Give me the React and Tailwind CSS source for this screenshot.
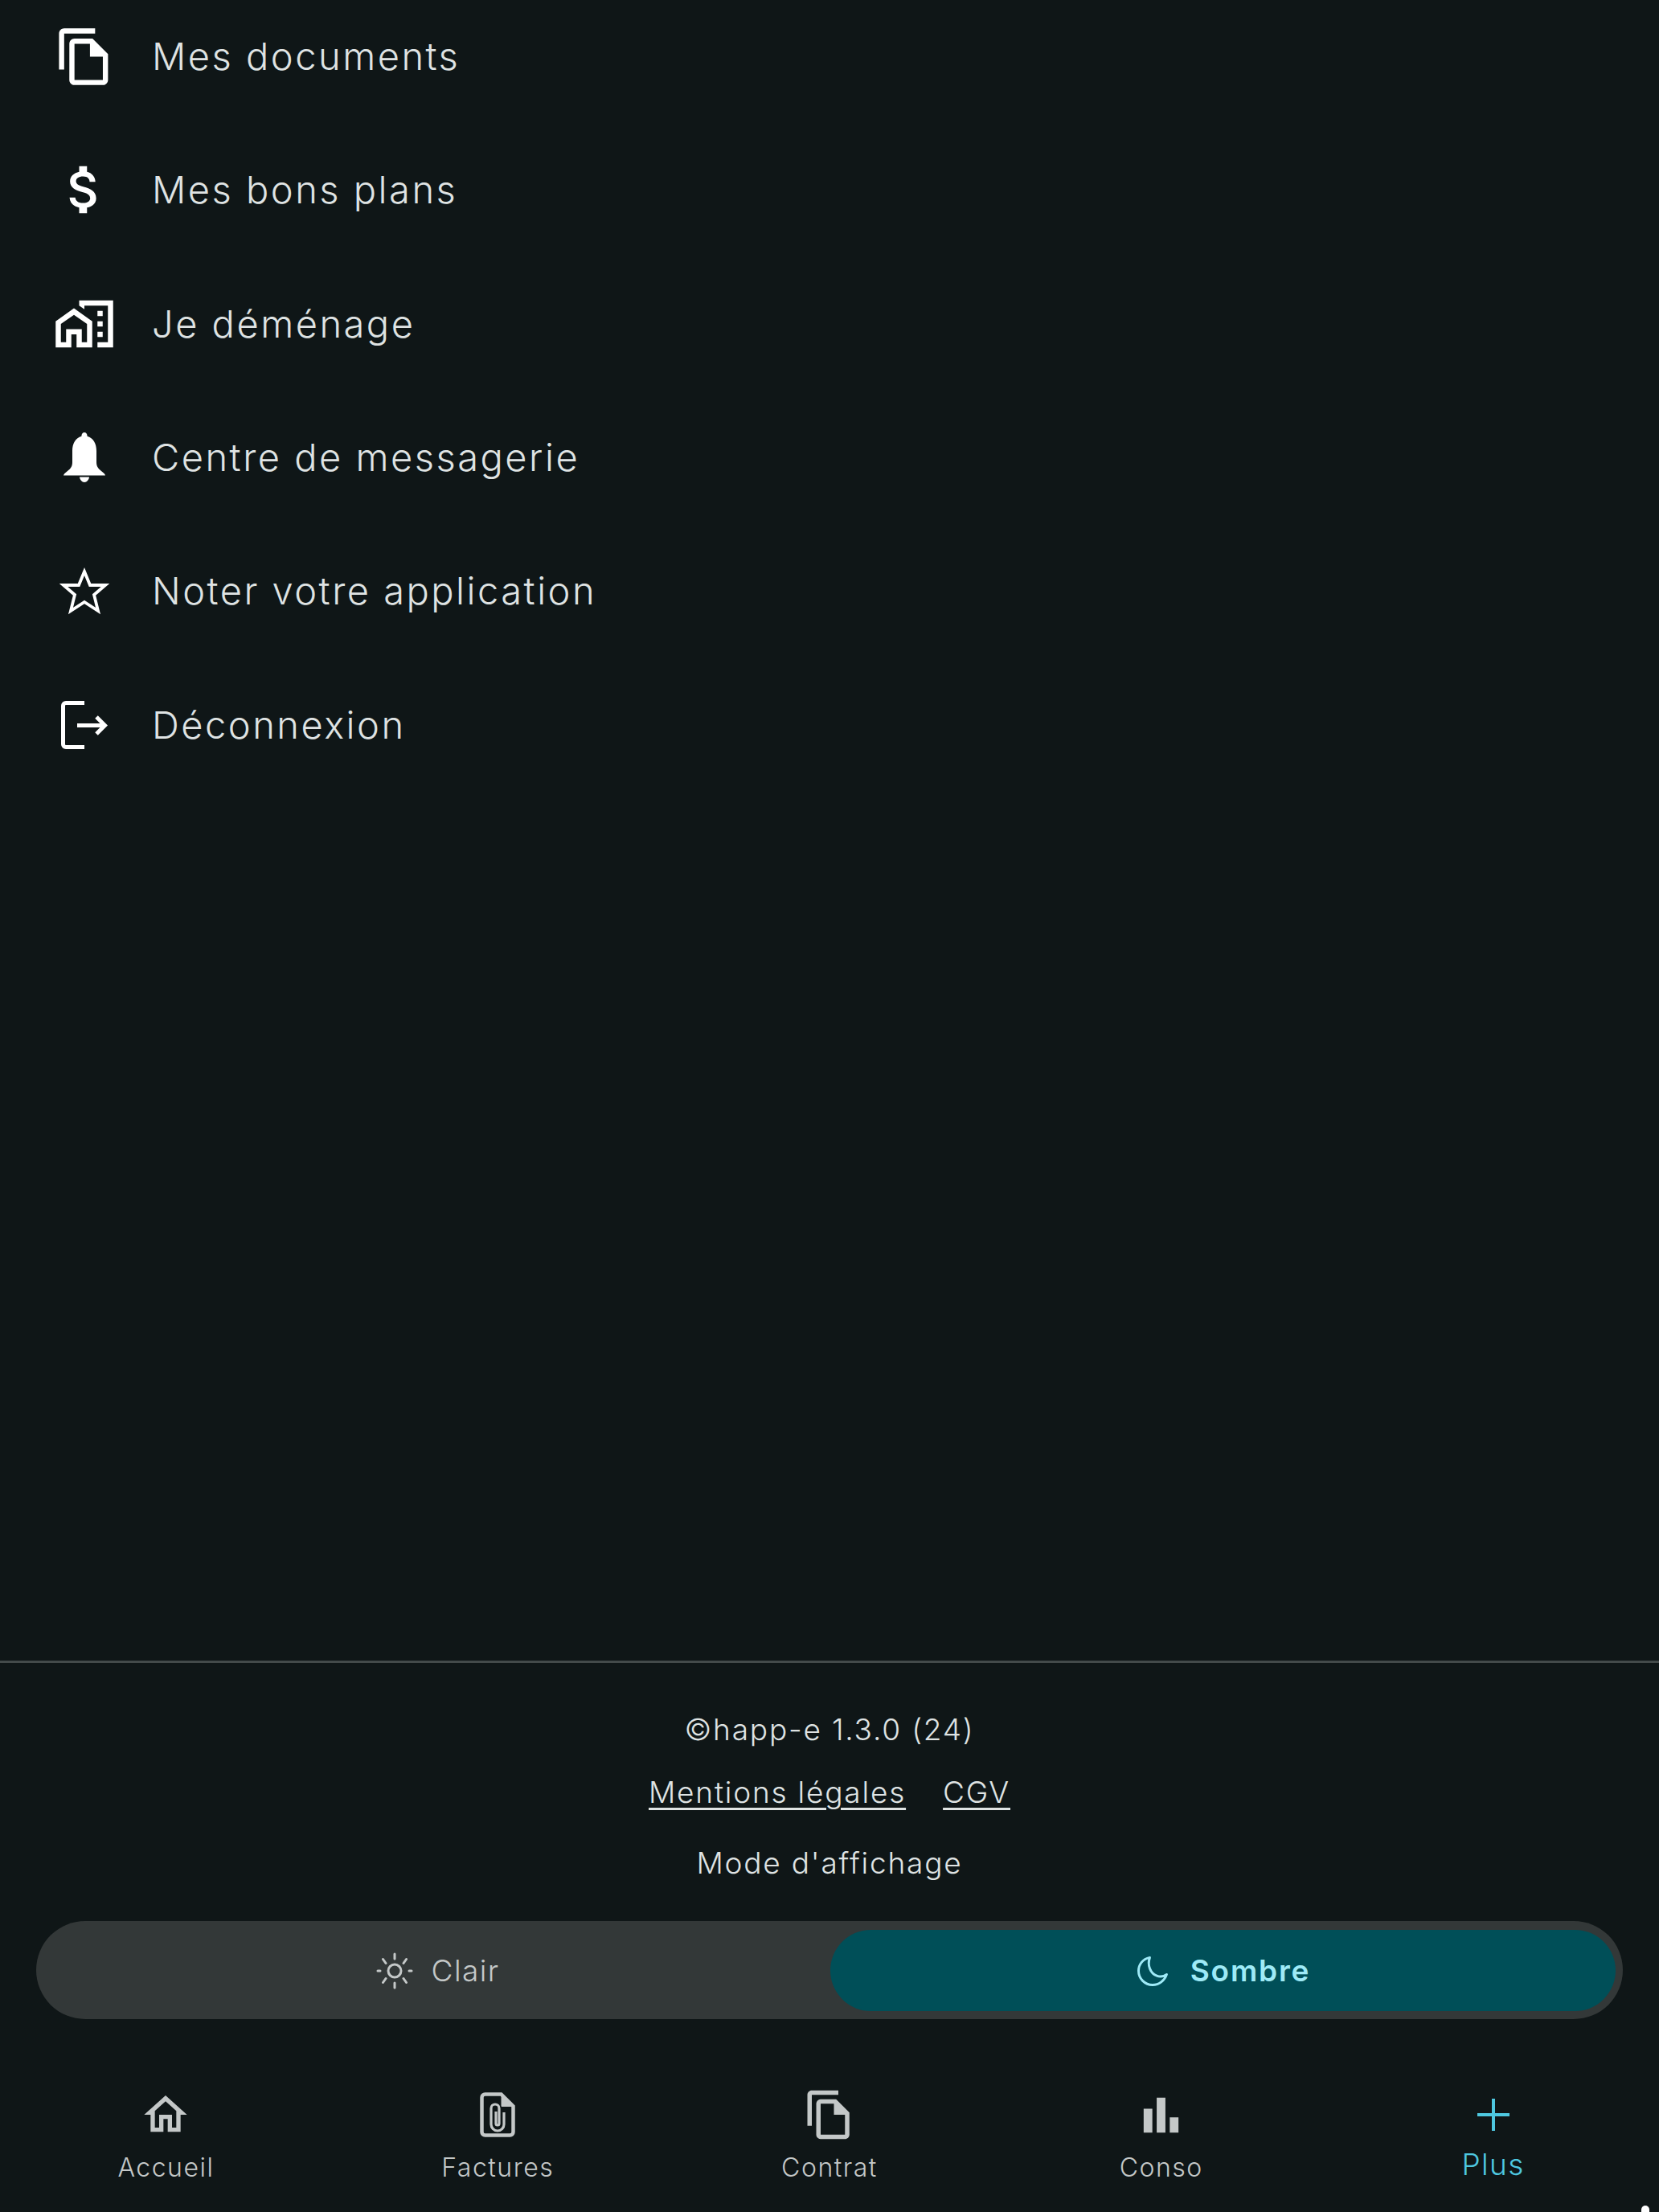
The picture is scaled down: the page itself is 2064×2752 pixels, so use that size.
import React from "react";
import { MdOutlineFileCopy, MdAttachMoney, MdOutlineMapsHomeWork, MdOutlineHome, MdBarChart } from "react-icons/md";

const font = { fontFamily: "Inter, 'Noto Sans', sans-serif" };

const Bell = ({ className }) => (
  <svg viewBox="0 0 54 62" className={className} fill="currentColor">
    <path d="M27 0c2 0 3.600 1.800 3.600 4.800C38 7 42 14 42 23v14c0 5 2 8 6 11 2.500 2 4.500 3.500 5 5.500H1c.5-2 2.500-3.500 5-5.500 4-3 6-6 6-11V23c0-9 4-16 11.400-18.200C23.400 1.800 25 0 27 0z" />
    <path d="M21 55.500h12c-.4 3.500-3 6.500-6 6.500s-5.600-3-6-6.500z" />
  </svg>
);

const Star = ({ className }) => (
  <svg viewBox="0 0 62 60" className={className} fill="none" stroke="currentColor" strokeWidth="3.800" strokeLinejoin="miter">
    <path d="M31 6l7 17h19L43 35l5 20-17-11-17 11 5-20L5 23h19z" />
  </svg>
);

const Logout = ({ className }) => (
  <svg viewBox="0 0 58 60" className={className} fill="none" stroke="currentColor" strokeWidth="5">
    <path d="M29 2.500H6a3.500 3.500 0 0 0-3.500 3.500v48a3.500 3.500 0 0 0 3.500 3.500h23" />
    <path d="M20 30.500h33" />
    <path d="M44 20l10.500 10.500L44 41" />
  </svg>
);

const Sun = ({ className }) => (
  <svg viewBox="0 0 48 48" className={className} fill="none" stroke="currentColor" strokeWidth="3" strokeLinecap="round">
    <circle cx="24" cy="24" r="8" />
    <path d="M24 3v6M24 39v6M3 24h3M42 24h3M9.500 9.500l3.500 5M35 33.500l3.500 5M38.500 9.500l-3.500 5M13 33.500l-3.500 5" />
  </svg>
);

const Moon = ({ className }) => (
  <svg viewBox="0 0 48 48" className={className} fill="none" stroke="currentColor" strokeWidth="3.400" strokeLinecap="round" strokeLinejoin="round">
    <path d="M20 5C10 7 4 15 4 24c0 11 9 20 20 20 9 0 17-6 20-15-4 3-9 4-14 2-9-3-14-15-10-26z" />
  </svg>
);

const Factures = ({ className }) => (
  <svg viewBox="0 0 44 56" className={className} fill="none" stroke="currentColor">
    <path d="M6.500 2.500h20l15 15v32a4 4 0 0 1-4 4h-31a4 4 0 0 1-4-4v-43a4 4 0 0 1 4-4z" strokeWidth="4.500" />
    <path d="M27 3v14.500h14.500" fill="currentColor" strokeWidth="1" />
    <path d="M30 25v15a8 8 0 0 1-16 0V20a5 5 0 0 1 10 0v19a2 2 0 0 1-4 0V24" strokeWidth="3.200" />
  </svg>
);

const Plus = ({ className }) => (
  <svg viewBox="0 0 40 40" className={className} fill="currentColor">
    <rect x="18" y="0" width="4" height="40" />
    <rect x="0" y="18" width="40" height="4" />
  </svg>
);

const rows = [
  { label: "Mes documents", icon: <MdOutlineFileCopy className="w-[77px] h-[77px] text-white" /> },
  { label: "Mes bons plans", icon: <MdAttachMoney className="w-[78px] h-[78px] text-white" /> },
  { label: "Je déménage", icon: <MdOutlineMapsHomeWork className="w-[78px] h-[78px] text-white" /> },
  { label: "Centre de messagerie", icon: <Bell className="w-[54px] h-[62px] text-white" /> },
  { label: "Noter votre application", icon: <Star className="w-[62px] h-[60px] text-white" /> },
  { label: "Déconnexion", icon: <Logout className="w-[58px] h-[60px] text-white" /> },
];

const nav = [
  { label: "Accueil", icon: <MdOutlineHome className="w-[64px] h-[64px]" /> },
  { label: "Factures", icon: <Factures className="w-[44px] h-[56px]" /> },
  { label: "Contrat", icon: <MdOutlineFileCopy className="w-[66px] h-[66px]" /> },
  { label: "Conso", icon: <MdBarChart className="w-[65px] h-[65px]" /> },
];

export default function App() {
  return (
    <div style={font} className="relative w-[2064px] h-[2752px] overflow-hidden bg-[#0f1617] flex flex-col text-[#dfe3e3]">
      <ul className="-mt-[13px] flex flex-col">
        {rows.map((r) => (
          <li key={r.label} className="h-[166.3px] flex items-center">
            <span className="w-[189px] pl-[30px] pr-[9px] shrink-0 flex justify-center items-center">{r.icon}</span>
            <span className="text-[47px] leading-[60px] tracking-[2.5px] font-[350]">{r.label}</span>
          </li>
        ))}
      </ul>

      <footer className="mt-auto flex flex-col">
        <div className="h-[3px] bg-[#434a4a]" />
        <div className="pt-[59px] flex flex-col items-center text-[37px] leading-[48px] tracking-[1.8px] font-[350]">
          <p>©happ-e 1.3.0 (24)</p>
          <div className="mt-[30px] flex gap-[46px]">
            <a className="underline underline-offset-[6px] decoration-[3px]">Mentions légales</a>
            <a className="underline underline-offset-[6px] decoration-[3px]">CGV</a>
          </div>
          <p className="mt-[40px]">Mode d'affichage</p>
        </div>

        <div className="mt-[48px] mx-[45px] h-[122px] rounded-[61px] bg-[#333838] flex items-stretch pt-[11px] pr-[9px] pb-[10px]">
          <div className="flex-1 pl-[10px] flex items-center justify-center gap-[22px] text-[#c4c8c8] text-[37px] tracking-[1.4px] font-[350]">
            <Sun className="w-[48px] h-[48px]" />
            <span>Clair</span>
          </div>
          <div className="w-[977px] rounded-[51px] bg-[#004f58] flex items-center justify-center gap-[26px] text-[#9eeaf7] text-[37px] tracking-[1.8px] font-semibold">
            <Moon className="w-[42px] h-[42px]" />
            <span>Sombre</span>
          </div>
        </div>

        <nav className="h-[240px] grid grid-cols-5 pt-[81px]">
          {nav.map((n) => (
            <div key={n.label} className="flex flex-col items-center text-[#c4c8c8]">
              <div className="h-[76px] flex items-center justify-center">{n.icon}</div>
              <span className="mt-[8px] text-[32px] leading-[40px] tracking-[1.5px] font-[350]">{n.label}</span>
            </div>
          ))}
          <div className="flex flex-col items-center text-[#4ec8e0]">
            <div className="h-[76px] flex items-center justify-center"><Plus className="w-[40px] h-[40px]" /></div>
            <span className="mt-[4px] text-[37px] leading-[40px] tracking-[1.4px] font-[350]">Plus</span>
          </div>
        </nav>
      </footer>

      <div className="absolute right-[12px] bottom-0 w-[10px] h-[8px] bg-white rounded-t-full" />
    </div>
  );
}
